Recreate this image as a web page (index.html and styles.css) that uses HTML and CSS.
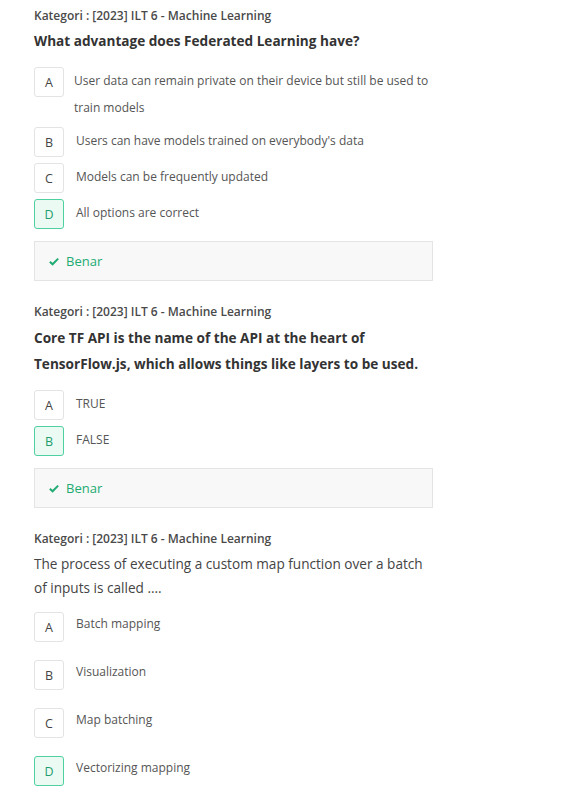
FILE: index.html
```html
<!DOCTYPE html>
<html>
<head>
<meta charset="utf-8">
<link rel="stylesheet" href="styles.css">
</head>
<body>
<div class="page">
  <section class="question">
    <div class="category">Kategori : [2023] ILT 6 - Machine Learning</div>
    <div class="title bold">What advantage does Federated Learning have?</div>
    <div class="options">
      <div class="option"><span class="key">A</span><span class="text first">User data can remain private on their device but still be used to train models</span></div>
      <div class="option"><span class="key">B</span><span class="text">Users can have models trained on everybody's data</span></div>
      <div class="option"><span class="key">C</span><span class="text">Models can be frequently updated</span></div>
      <div class="option"><span class="key correct">D</span><span class="text">All options are correct</span></div>
    </div>
    <div class="result"><svg class="check" viewBox="0 0 12 10" width="10" height="9"><path d="M1 5.2 L4.3 8.3 L11 1.6" fill="none" stroke="currentColor" stroke-width="2.4"/></svg><span>Benar</span></div>
  </section>

  <section class="question">
    <div class="category">Kategori : [2023] ILT 6 - Machine Learning</div>
    <div class="title bold two">Core TF API is the name of the API at the heart of TensorFlow.js, which allows things like layers to be used.</div>
    <div class="options">
      <div class="option"><span class="key">A</span><span class="text">TRUE</span></div>
      <div class="option"><span class="key correct">B</span><span class="text">FALSE</span></div>
    </div>
    <div class="result"><svg class="check" viewBox="0 0 12 10" width="10" height="9"><path d="M1 5.2 L4.3 8.3 L11 1.6" fill="none" stroke="currentColor" stroke-width="2.4"/></svg><span>Benar</span></div>
  </section>

  <section class="question">
    <div class="category">Kategori : [2023] ILT 6 - Machine Learning</div>
    <div class="title plain">The process of executing a custom map function over a batch of inputs is called ....</div>
    <div class="options loose">
      <div class="option"><span class="key">A</span><span class="text">Batch mapping</span></div>
      <div class="option"><span class="key">B</span><span class="text">Visualization</span></div>
      <div class="option"><span class="key">C</span><span class="text">Map batching</span></div>
      <div class="option"><span class="key correct">D</span><span class="text">Vectorizing mapping</span></div>
    </div>
  </section>
</div>
</body>
</html>
```

FILE: styles.css
```css
* { box-sizing: border-box; }
html, body { margin: 0; padding: 0; background: #fff; }
body {
  font-family: "Open Sans", "Noto Sans", sans-serif;
  color: #555;
}
.page {
  width: 433px;
  padding: 6px 0 10px 34px;
}
.question { margin-bottom: 21px; }
.category {
  font-size: 12px;
  font-weight: 600;
  line-height: 20px;
  color: #4a4a4a;
}
.title {
  margin-top: 2px;
  color: #333;
}
.title.bold {
  font-size: 13.6px;
  font-weight: 700;
  line-height: 26px;
}
.title.bold.two { margin-top: 3px; }
.title.plain {
  font-size: 13.6px;
  font-weight: 400;
  line-height: 24px;
  color: #444;
  margin-top: 3px;
}
.options {
  display: flex;
  flex-direction: column;
  gap: 6px;
  margin-top: 13px;
}
.option {
  display: flex;
  align-items: flex-start;
}
.key {
  flex: none;
  width: 30px;
  height: 30px;
  border: 1px solid #e3e3e3;
  border-radius: 3px;
  display: flex;
  align-items: center;
  justify-content: center;
  font-size: 12.5px;
  color: #444;
  background: #fff;
}
.key.correct {
  border-color: #4fd0a0;
  background: #ebfbf3;
  color: #1f9d6e;
}
.text {
  margin-left: 12px;
  font-size: 12px;
  line-height: 28px;
  color: #555;
}
.text.first { margin-left: 10px; line-height: 27px; }
.options.loose {
  gap: 18px;
  margin-top: 12px;
}
.options.loose .text { line-height: 24px; }
.result {
  margin-top: 12px;
  height: 40px;
  border: 1px solid #e4e4e4;
  background: #f8f8f8;
  display: flex;
  align-items: center;
  padding-left: 14px;
  color: #21ab72;
  font-size: 13px;
  font-weight: 400;
}
.check { margin-right: 7px; }
```
